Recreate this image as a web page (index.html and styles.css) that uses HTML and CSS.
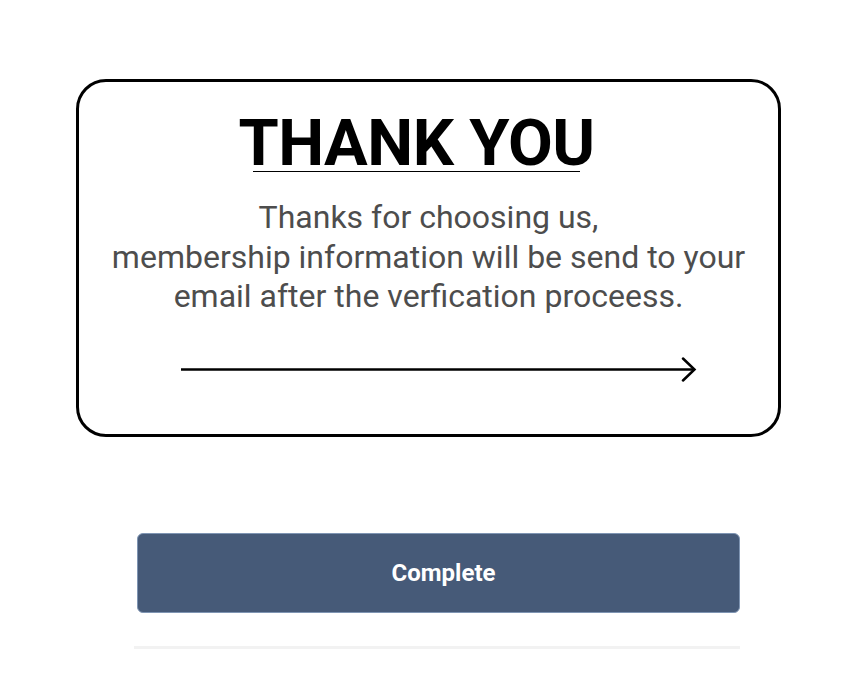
FILE: index.html
```html
<!DOCTYPE html>
<html lang="en">
<head>
<meta charset="utf-8">
<title>Thank You</title>
<link rel="stylesheet" href="styles.css">
</head>
<body>
<main class="page">
  <section class="card">
    <div class="head">
      <h1 class="title">THANK YOU</h1>
      <div class="rule"></div>
    </div>
    <p class="msg">Thanks for choosing us,<br>membership information will be send to your<br>email after the verfication proceess.</p>
    <div class="arrow-row">
      <svg class="arrow" width="518" height="26" viewBox="0 0 518 26" aria-hidden="true">
        <line x1="0" y1="12.5" x2="513" y2="12.5" stroke="#000" stroke-width="2.5"/>
        <polyline points="502,1.5 513.5,12.5 502,23.5" fill="none" stroke="#000" stroke-width="2.5" stroke-linecap="round" stroke-linejoin="miter"/>
      </svg>
    </div>
  </section>
  <div class="actions">
    <button class="btn" type="button">Complete</button>
  </div>
  <div class="divider"></div>
</main>
</body>
</html>
```

FILE: styles.css
```css
* { box-sizing: border-box; }
html, body { margin: 0; padding: 0; background: #fff; }
body { font-family: Roboto, "Liberation Sans", sans-serif; }

.page {
  padding: 79px 0 0 76px;
  width: 866px;
}

.card {
  width: 705px;
  height: 358px;
  border: 3px solid #000;
  border-radius: 30px;
  padding-top: 33px;
  display: flex;
  flex-direction: column;
}

.head {
  display: flex;
  flex-direction: column;
  align-items: center;
  padding-right: 24px;
}

.title {
  margin: 0;
  font-size: 65px;
  line-height: 56px;
  font-weight: 700;
  color: #000;
  letter-spacing: -0.5px;
}

.rule {
  width: 327px;
  height: 1px;
  background: #000;
}

.msg {
  margin: 26px 0 0;
  text-align: center;
  font-size: 32px;
  line-height: 39.5px;
  color: #4d4d4d;
  white-space: nowrap;
}

.arrow-row {
  margin-top: 40px;
  padding-left: 102px;
  display: flex;
}

.arrow { display: block; }

.actions {
  margin-top: 96px;
  padding-left: 61px;
}

.btn {
  display: block;
  width: 603px;
  height: 80px;
  padding: 0 0 0 10px;
  background: #465a78;
  border: 1px solid #7f95b3;
  border-radius: 6px;
  color: #fff;
  font-family: Roboto, "Liberation Sans", sans-serif;
  font-size: 24px;
  font-weight: 700;
  cursor: pointer;
}

.divider {
  margin: 33px 0 0 58px;
  width: 606px;
  height: 3px;
  background: #f2f2f2;
}
```
